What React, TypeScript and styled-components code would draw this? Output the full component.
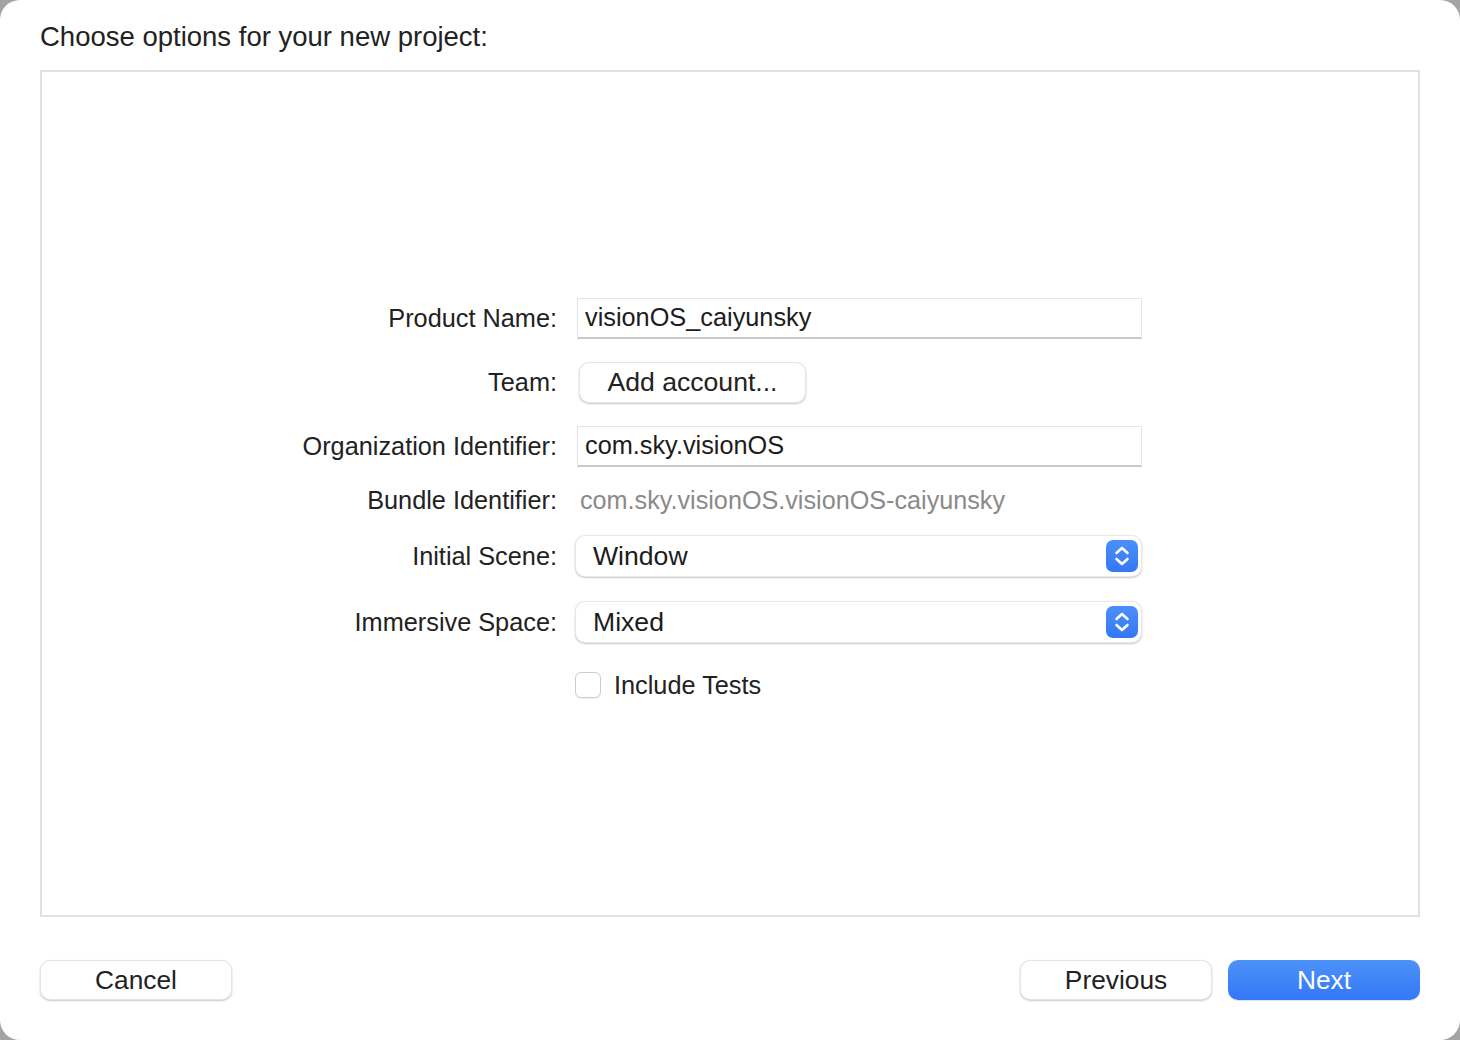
import React from 'react';
import styled, { createGlobalStyle } from 'styled-components';

const GlobalStyle = createGlobalStyle`
  html, body {
    margin: 0;
    padding: 0;
    background: #a4a4a4;
  }
  body {
    font-family: "Liberation Sans", Arial, sans-serif;
    color: #222222;
  }
`;

const Window = styled.div`
  width: 1460px;
  height: 1040px;
  box-sizing: border-box;
  background: #ffffff;
  border-radius: 20px;
  padding: 20px 40px 40px;
  display: flex;
  flex-direction: column;
  overflow: hidden;
`;

const Title = styled.div`
  font-size: 27.5px;
  line-height: 34px;
  color: #222222;
  margin-bottom: 16px;
`;

const Panel = styled.div`
  height: 847px;
  box-sizing: border-box;
  border: 2px solid #e1e1e1;
  background: #ffffff;
  padding-top: 225px;
  display: flex;
  flex-direction: column;
`;

const Row = styled.div<{ $top?: number }>`
  display: grid;
  grid-template-columns: 515px 565px;
  column-gap: 20px;
  align-items: center;
  height: 42px;
  margin-top: ${p => p.$top ?? 0}px;
`;

const Label = styled.div`
  text-align: right;
  font-size: 25.3px;
  color: #222222;
  white-space: nowrap;
`;

const TextField = styled.div`
  height: 41px;
  box-sizing: border-box;
  border: 1px solid #e4e4e4;
  border-bottom: 2px solid #c9c9c9;
  background: #ffffff;
  padding: 0 7px;
  display: flex;
  align-items: center;
  font-size: 25.3px;
  color: #1c1c1c;
`;

const StaticValue = styled.div`
  padding-left: 3px;
  font-size: 25.2px;
  color: #8a8a8a;
  white-space: nowrap;
`;

const PushButton = styled.button<{ $primary?: boolean; $width?: number }>`
  width: ${p => p.$width ?? 192}px;
  height: 40px;
  border-radius: 10px;
  font-family: "Liberation Sans", Arial, sans-serif;
  font-size: 26.3px;
  padding: 0;
  cursor: default;
  border: ${p => (p.$primary ? 'none' : '1px solid rgba(0, 0, 0, 0.1)')};
  background: ${p => (p.$primary ? 'linear-gradient(180deg, #4d92f8 0%, #3477f6 100%)' : '#ffffff')};
  color: ${p => (p.$primary ? '#ffffff' : '#222222')};
  box-shadow: ${p => (p.$primary ? '0 1px 1px rgba(0, 0, 0, 0.12)' : '0 1px 2px rgba(0, 0, 0, 0.22)')};
`;

const AccountButton = styled(PushButton)`
  margin-left: 2px;
  height: 41px;
  font-size: 26.6px;
`;

const PopUp = styled.div`
  margin-left: -2px;
  width: 567px;
  height: 42px;
  box-sizing: border-box;
  border-radius: 10px;
  border: 1px solid rgba(0, 0, 0, 0.09);
  box-shadow: 0 1px 2px rgba(0, 0, 0, 0.22);
  background: #ffffff;
  display: flex;
  align-items: center;
  justify-content: space-between;
  padding: 0 3px 0 17px;
  font-size: 26.6px;
  color: #1c1c1c;
`;

const Stepper = styled.div`
  width: 32px;
  height: 32px;
  border-radius: 7px;
  background: linear-gradient(180deg, #4b90f8 0%, #3477f6 100%);
  display: flex;
  align-items: center;
  justify-content: center;
`;

const CheckRow = styled.label`
  margin-left: -2px;
  display: flex;
  align-items: center;
  gap: 13px;
  font-size: 25.3px;
  color: #222222;
`;

const CheckBox = styled.span`
  width: 26px;
  height: 26px;
  box-sizing: border-box;
  border-radius: 6px;
  border: 1px solid #cdcdcd;
  background: #ffffff;
  box-shadow: 0 1px 1px rgba(0, 0, 0, 0.06);
`;

const Footer = styled.div`
  margin-top: 43px;
  display: flex;
  align-items: center;
  justify-content: space-between;
`;

const ButtonGroup = styled.div`
  display: flex;
  gap: 16px;
`;

function Chevrons() {
  return (
    <svg width="32" height="32" viewBox="0 0 32 32" fill="none">
      <path d="M10.5 13L16 8l5.5 5" stroke="#fff" strokeWidth="2.6" strokeLinecap="round" strokeLinejoin="round" />
      <path d="M10.5 19L16 24l5.5-5" stroke="#fff" strokeWidth="2.6" strokeLinecap="round" strokeLinejoin="round" />
    </svg>
  );
}

export default function App() {
  return (
    <>
      <GlobalStyle />
      <Window>
        <Title>Choose options for your new project:</Title>
        <Panel>
          <Row>
            <Label>Product Name:</Label>
            <TextField>visionOS_caiyunsky</TextField>
          </Row>
          <Row $top={22}>
            <Label>Team:</Label>
            <div>
              <AccountButton $width={227}>Add account...</AccountButton>
            </div>
          </Row>
          <Row $top={22}>
            <Label>Organization Identifier:</Label>
            <TextField>com.sky.visionOS</TextField>
          </Row>
          <Row $top={12}>
            <Label>Bundle Identifier:</Label>
            <StaticValue>com.sky.visionOS.visionOS-caiyunsky</StaticValue>
          </Row>
          <Row $top={14}>
            <Label>Initial Scene:</Label>
            <PopUp>
              Window
              <Stepper><Chevrons /></Stepper>
            </PopUp>
          </Row>
          <Row $top={24}>
            <Label>Immersive Space:</Label>
            <PopUp>
              Mixed
              <Stepper><Chevrons /></Stepper>
            </PopUp>
          </Row>
          <Row $top={21}>
            <div />
            <CheckRow>
              <CheckBox />
              Include Tests
            </CheckRow>
          </Row>
        </Panel>
        <Footer>
          <PushButton>Cancel</PushButton>
          <ButtonGroup>
            <PushButton>Previous</PushButton>
            <PushButton $primary>Next</PushButton>
          </ButtonGroup>
        </Footer>
      </Window>
    </>
  );
}
